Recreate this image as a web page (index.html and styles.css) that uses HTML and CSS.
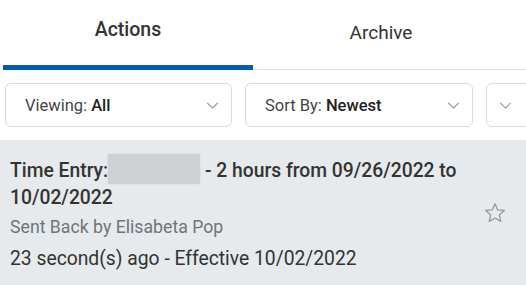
FILE: index.html
```html
<!DOCTYPE html>
<html lang="en">
<head>
  <meta charset="UTF-8" />
  <title>Inbox</title>
  <link rel="stylesheet" href="styles.css">
</head>
<body>
  <div class="tabs">
    <div class="tab active">Actions</div>
    <div class="tab">Archive</div>
  </div>

  <div class="filters">
    <div class="select">
      <span>Viewing: <b>All</b></span>
      <svg class="chev" viewBox="0 0 14 8"><path d="M1 1l6 6 6-6" /></svg>
    </div>
    <div class="select">
      <span>Sort By: <b>Newest</b></span>
      <svg class="chev" viewBox="0 0 14 8"><path d="M1 1l6 6 6-6" /></svg>
    </div>
    <div class="select small">
      <svg class="chev" viewBox="0 0 14 8"><path d="M1 1l6 6 6-6" /></svg>
    </div>
  </div>

  <div class="item">
    <div class="item-body">
      <div class="item-title">Time Entry:<span class="redacted"></span> - 2 hours from 09/26/2022 to 10/02/2022</div>
      <div class="item-sub">Sent Back by Elisabeta Pop</div>
      <div class="item-meta">23 second(s) ago - Effective 10/02/2022</div>
    </div>
    <svg class="star" viewBox="0 0 24 24">
      <path d="M12 2.8l2.7 6.1 6.6.6-5 4.4 1.5 6.5L12 17l-5.8 3.4 1.5-6.5-5-4.4 6.6-.6z" />
    </svg>
  </div>
</body>
</html>
```

FILE: styles.css
```css
body {
  margin: 0;
  background: #fff;
  font-family: Roboto, "Liberation Sans", sans-serif;
  color: #333;
  overflow: hidden;
}

.tabs {
  display: flex;
  margin: 0 0 0 3px;
  border-bottom: 1px solid #dfe2e6;
}

.tab {
  width: 256px;
  height: 69px;
  box-sizing: border-box;
  padding-top: 21px;
  text-align: center;
  font-size: 19px;
  color: #333;
}

.tab.active {
  width: 250px;
  padding-top: 18px;
  font-size: 19.5px;
  font-weight: 500;
  border-bottom: 5px solid #005cb9;
  margin-bottom: -1px;
  height: 70px;
}

.filters {
  display: flex;
  gap: 13px;
  padding: 13px 0 13px 5px;
}

.select {
  flex: 0 0 228px;
  height: 44px;
  box-sizing: border-box;
  border: 1px solid #d8dce0;
  border-radius: 6px;
  display: flex;
  align-items: center;
  justify-content: space-between;
  padding: 0 12px 0 19px;
  font-size: 16.5px;
  color: #444;
}

.select:first-child {
  flex-basis: 227px;
}

.select b {
  font-weight: 500;
  color: #222;
}

.select.small {
  flex: 0 0 60px;
  padding-left: 12px;
}

.chev {
  width: 13px;
  height: 7px;
  fill: none;
  stroke: #8a8f94;
  stroke-width: 1.2;
}

.item {
  background: #e6eaed;
  display: flex;
  align-items: center;
  padding: 14px 19px 16px 10px;
  min-height: 145px;
  box-sizing: border-box;
}

.item-body {
  width: 462px;
}

.item-title {
  font-size: 19.3px;
  font-weight: 500;
  line-height: 27px;
  color: #333;
}

.redacted {
  display: inline-block;
  width: 92px;
  height: 30px;
  vertical-align: -7px;
  background: #cdd1d4;
  box-shadow: 0 0 2px #d3d7da;
}

.item-sub {
  margin-top: 4px;
  font-size: 17.7px;
  line-height: 24px;
  color: #707478;
}

.item-meta {
  margin-top: 6px;
  font-size: 19.3px;
  line-height: 27px;
  color: #333;
}

.star {
  width: 24px;
  height: 24px;
  margin-left: auto;
  fill: none;
  stroke: #999;
  stroke-width: 1.3;
  stroke-linejoin: round;
}
```
